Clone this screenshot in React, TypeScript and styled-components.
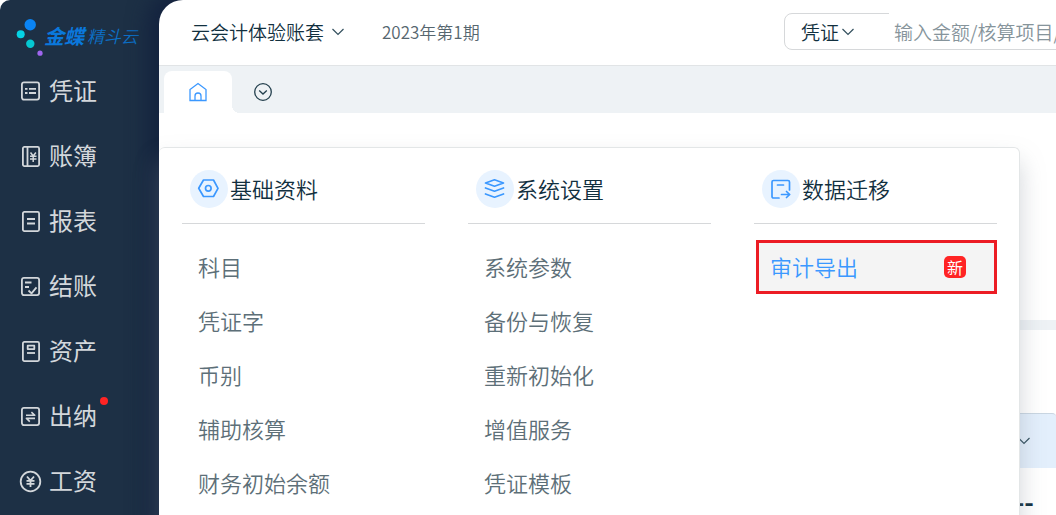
import React from "react";
import styled, { createGlobalStyle } from "styled-components";

const GlobalStyle = createGlobalStyle`
  * { box-sizing: border-box; }
  body {
    margin: 0;
    background: #fff;
    font-family: "Noto Sans CJK SC", sans-serif;
    font-weight: 350;
    color: #12303f;
  }
  a { color: inherit; text-decoration: none; }
  button, input, select { font: inherit; color: inherit; }
  ul { list-style: none; margin: 0; padding: 0; }
`;

const Shell = styled.div`
  display: flex;
  min-height: 100vh;
  overflow: hidden;
  border-top-left-radius: 10px;
  background: #1d3045;
`;

const Sidebar = styled.nav`
  flex: none;
  width: 159px;
`;

const Logo = styled.a`
  display: flex;
  align-items: center;
  height: 59px;
  padding: 14px 0 0 14px;
`;

const LogoMark = styled.svg`
  flex: none;
  width: 30px;
  height: 40px;
`;

const BrandName = styled.span`
  padding-bottom: 2px;
  font-size: 20px;
  font-weight: 700;
  font-style: italic;
  line-height: 24px;
  color: #0a78dd;
  white-space: nowrap;
`;

const ProductName = styled.span`
  margin-left: 3px;
  padding-bottom: 2px;
  font-size: 17px;
  font-style: italic;
  line-height: 24px;
  color: #0c70c8;
  white-space: nowrap;
`;

const SideLink = styled.a`
  position: relative;
  display: flex;
  align-items: center;
  gap: 6px;
  height: 65px;
  padding-left: 19px;
  color: #d3d7db;
`;

const SideLabel = styled.span`
  padding-bottom: 3px;
  font-size: 24px;
  font-weight: 400;
  line-height: 36px;
`;

const SideIcon = styled.svg`
  flex: none;
  width: 24px;
  height: 24px;
  fill: none;
  stroke: #d3d7db;
  stroke-width: 1.8;
  stroke-linejoin: round;
`;

const AlertDot = styled.span`
  position: absolute;
  left: 100px;
  top: 13px;
  width: 8px;
  height: 8px;
  border-radius: 50%;
  background: #ff2424;
`;

const Main = styled.main`
  position: relative;
  flex: 1;
  min-width: 0;
  display: flex;
  flex-direction: column;
  border-top-left-radius: 24px;
  background: #fff;
  box-shadow: 0 0 20px 12px #14233f;
`;

const Header = styled.header`
  display: flex;
  align-items: center;
  height: 66px;
  padding: 0 0 2px 32px;
  border-bottom: 1px solid #e1e4e6;
  overflow: hidden;
  white-space: nowrap;
`;

const AccountButton = styled.button`
  display: flex;
  align-items: center;
  gap: 7px;
  padding: 0;
  border: 0;
  background: none;
  font-size: 19px;
  line-height: 28px;
`;

const Chevron = styled.svg`
  flex: none;
  width: 14px;
  height: 10px;
  fill: none;
  stroke: #33505e;
  stroke-width: 1.2;
`;

const Period = styled.span`
  margin-left: 37px;
  font-size: 17px;
  line-height: 28px;
  color: #56666f;
`;

const Search = styled.form`
  flex: none;
  display: flex;
  width: 336px;
  height: 37px;
  margin-left: auto;
  margin-right: -64px;
  border: 1px solid #d6d8da;
  border-radius: 8px;
`;

const TypeField = styled.label`
  display: flex;
  align-items: center;
  width: 104px;
  padding-left: 16px;
`;

const TypeSelect = styled.select`
  appearance: none;
  width: 40px;
  padding: 0;
  border: 0;
  outline: 0;
  background: none;
  font-size: 19px;
  line-height: 28px;
`;

const SearchInput = styled.input`
  flex: 1;
  min-width: 0;
  margin-top: -1px;
  padding: 0 5px;
  border: 0;
  outline: 0;
  background: #fff;
  font-size: 19px;
  &::placeholder { color: #86949b; opacity: 1; }
`;

const TabStrip = styled.div`
  display: flex;
  align-items: flex-end;
  height: 47px;
  padding-left: 5px;
  background: #eef2f5;
`;

const HomeTab = styled.button`
  position: relative;
  display: grid;
  place-items: center;
  width: 68px;
  height: 42px;
  padding: 0;
  border: 0;
  border-radius: 8px 8px 0 0;
  background: #fff;
  &::after {
    content: "";
    position: absolute;
    left: 100%;
    bottom: 0;
    width: 8px;
    height: 8px;
    background: radial-gradient(circle at 100% 0, transparent 8px, #fff 8px);
  }
`;

const TabsMenu = styled.button`
  display: grid;
  place-items: center;
  width: 62px;
  height: 42px;
  padding: 0;
  border: 0;
  background: none;
`;

const TabIcon = styled.svg<{ $color: string }>`
  width: 20px;
  height: 20px;
  fill: none;
  stroke: ${(p) => p.$color};
  stroke-width: 1.3;
`;

const Content = styled.section`
  position: relative;
  flex: 1;
  display: flex;
  flex-direction: column;
`;

const Overview = styled.div`
  height: 207px;
`;

const Divider = styled.div`
  height: 10px;
  background: #eef2f5;
`;

const Card = styled.div`
  padding-top: 83px;
`;

const FilterBar = styled.div`
  display: flex;
  align-items: center;
  justify-content: flex-end;
  height: 55px;
  padding-right: 25px;
  border-top: 1px solid #c9d6e2;
  border-top-right-radius: 4px;
  background: #e3effc;
`;

const EmptyValue = styled.p`
  margin: 0;
  padding: 15px 22px 0 0;
  font-size: 26px;
  font-weight: 700;
  line-height: 36px;
  text-align: right;
`;

const Flyout = styled.div`
  position: absolute;
  top: 34px;
  left: 0;
  right: 36px;
  bottom: -24px;
  display: grid;
  grid-template-columns: repeat(3, 1fr);
  gap: 43px;
  align-items: start;
  padding: 22px 22px 22px 23px;
  border: 1px solid #e3e6e7;
  border-left: 0;
  border-radius: 6px;
  background: #fff;
  box-shadow: 0 14px 24px rgba(125, 135, 145, 0.35);
`;

const GroupHead = styled.h2`
  display: flex;
  align-items: center;
  gap: 2px;
  margin: 0 0 16px;
  padding: 0 8px 15px;
  border-bottom: 1px solid #d6d8da;
  font-size: 22px;
  font-weight: 350;
  line-height: 32px;
  white-space: nowrap;
`;

const GroupTitle = styled.span`
  padding-bottom: 2px;
`;

const GroupBadge = styled.svg`
  flex: none;
  width: 38px;
  height: 38px;
  border-radius: 50%;
  background: #e8f3ff;
  fill: none;
  stroke: #3b98ff;
  stroke-width: 1.7;
  stroke-linecap: round;
  stroke-linejoin: round;
`;

const MenuLink = styled.a<{ $active?: boolean }>`
  display: flex;
  align-items: center;
  justify-content: space-between;
  height: 54px;
  margin-left: ${(p) => (p.$active ? "2px" : "0")};
  padding: ${(p) => (p.$active ? "0 28px 2px 11px" : "0 16px 2px")};
  border: ${(p) => (p.$active ? "3px solid #ec1c24" : "0")};
  background: ${(p) => (p.$active ? "#f4f4f4" : "none")};
  color: ${(p) => (p.$active ? "#3b98ff" : "#5d6f78")};
  font-size: 22px;
  line-height: 32px;
  white-space: nowrap;
`;

const NewTag = styled.span`
  width: 22px;
  height: 22px;
  margin-top: 2px;
  border-radius: 5px;
  background: #ff2424;
  color: #fff;
  font-size: 16px;
  font-weight: 400;
  line-height: 22px;
  text-align: center;
`;

const Down = () => (
  <Chevron viewBox="0 0 14 10" aria-hidden="true">
    <path d="M1.5 2 7 7.5 12.5 2" />
  </Chevron>
);

const sideItems: { label: string; icon: React.ReactNode; alert?: boolean }[] = [
  {
    label: "凭证",
    icon: (
      <>
        <rect x="2.9" y="2.4" width="17.2" height="17.2" rx="2" />
        <path d="M6 8.800h2.500M10 8.800h7M6 13h2.500M10 13h7" />
      </>
    ),
  },
  {
    label: "账簿",
    icon: (
      <>
        <rect x="3.9" y="1.9" width="16.2" height="19.2" rx="1.5" />
        <path d="M8.5 2v19" />
        <path strokeWidth="1.5" d="M11.5 7.5l2.700 3.500 2.700-3.500M11 11.200h6.500M11 14h6.500M14.200 11v6" />
      </>
    ),
  },
  {
    label: "报表",
    icon: (
      <>
        <rect x="3.9" y="1.9" width="16.2" height="19.2" rx="1.5" />
        <path d="M8 9h8M8 13.5h8" />
      </>
    ),
  },
  {
    label: "结账",
    icon: (
      <>
        <rect x="2.9" y="2.9" width="17.2" height="17.2" rx="2" />
        <path d="M6 7.5h6.5M6 12h4M9.5 15.5l3 2.800 5-6" />
      </>
    ),
  },
  {
    label: "资产",
    icon: (
      <>
        <rect x="3.9" y="1.9" width="16.2" height="19.2" rx="1.5" />
        <rect x="8.7" y="5.7" width="6.6" height="3.4" />
        <path d="M8 13h8" />
      </>
    ),
  },
  {
    label: "出纳",
    alert: true,
    icon: (
      <>
        <rect x="2.9" y="2.9" width="17.2" height="17.2" rx="2" />
        <path strokeWidth="1.6" d="M7 10.300h8.800l-3.400-3.200M16 13.400H7.400l3.400 3.200" />
      </>
    ),
  },
  {
    label: "工资",
    icon: (
      <>
        <circle cx="11.5" cy="11.5" r="9.8" />
        <path d="M8 6.500l3.500 4.200L15 6.500M7.500 10.800h8M7.500 13.800h8M11.500 10.700v6.300" />
      </>
    ),
  },
];

const groups: {
  title: string;
  icon: React.ReactNode;
  items: { label: string; active?: boolean }[];
}[] = [
  {
    title: "基础资料",
    icon: (
      <>
        <path d="M13.5 10h10L28 18.3l-4.5 8.200h-10L8.700 18.300z" />
        <circle cx="18.3" cy="18.3" r="2.8" />
      </>
    ),
    items: ["科目", "凭证字", "币别", "辅助核算", "财务初始余额"].map((label) => ({ label })),
  },
  {
    title: "系统设置",
    icon: (
      <>
        <path d="M18.5 9.800l9 3.200-9 3.200-9-3.200z" />
        <path d="M9.5 18l9 3.200 9-3.200M9.500 24l9 3.200 9-3.200" />
      </>
    ),
    items: ["系统参数", "备份与恢复", "重新初始化", "增值服务", "凭证模板"].map((label) => ({ label })),
  },
  {
    title: "数据迁移",
    icon: (
      <>
        <path d="M17 28h-5.500a1.500 1.500 0 0 1-1.500-1.500v-14.500a1.500 1.500 0 0 1 1.500-1.500h14.500a1.500 1.500 0 0 1 1.500 1.500v8M15.500 15h6M19.500 24.500h8M24.500 21.500l3.200 3-3.200 3" />
      </>
    ),
    items: [{ label: "审计导出", active: true }],
  },
];

export default function App() {
  return (
    <>
      <GlobalStyle />
      <Shell>
        <Sidebar>
          <Logo href="#">
            <LogoMark viewBox="14 18 30 40" aria-hidden="true">
              <circle cx="30.2" cy="25.800" r="5.7" fill="#0a84f5" />
              <circle cx="20.7" cy="35.300" r="4" fill="#05d2e4" />
              <circle cx="30.3" cy="44.800" r="4.2" fill="#05c8d2" />
              <circle cx="40" cy="54.200" r="2.6" fill="#a066f0" />
            </LogoMark>
            <BrandName>金蝶</BrandName>
            <ProductName>精斗云</ProductName>
          </Logo>
          {sideItems.map((item) => (
            <SideLink key={item.label} href="#">
              <SideIcon viewBox="0 0 24 24" aria-hidden="true">{item.icon}</SideIcon>
              <SideLabel>{item.label}</SideLabel>
              {item.alert && <AlertDot />}
            </SideLink>
          ))}
        </Sidebar>
        <Main>
          <Header>
            <AccountButton type="button">
              云会计体验账套
              <Down />
            </AccountButton>
            <Period>2023年第1期</Period>
            <Search>
              <TypeField>
                <TypeSelect aria-label="类型">
                  <option>凭证</option>
                </TypeSelect>
                <Down />
              </TypeField>
              <SearchInput aria-label="搜索" placeholder="输入金额/核算项目/" />
            </Search>
          </Header>
          <TabStrip>
            <HomeTab type="button" aria-label="首页">
              <TabIcon $color="#3b98ff" viewBox="0 0 20 20" aria-hidden="true">
                <path d="M2 18.500V7.500L10 1.500l8 6v11zM7 18.500v-4.500a3 3 0 0 1 6 0v4.500" />
              </TabIcon>
            </HomeTab>
            <TabsMenu type="button" aria-label="更多标签">
              <TabIcon $color="#24404e" viewBox="0 0 20 20" aria-hidden="true">
                <circle cx="10" cy="10" r="8.3" />
                <path d="M6.200 8.500L10 12l3.800-3.500" />
              </TabIcon>
            </TabsMenu>
          </TabStrip>
          <Content>
            <Overview />
            <Divider />
            <Card>
              <FilterBar>
                <Down />
              </FilterBar>
              <EmptyValue>--</EmptyValue>
            </Card>
            <Flyout>
              {groups.map((group) => (
                <section key={group.title}>
                  <GroupHead>
                    <GroupBadge viewBox="0 0 38 38" aria-hidden="true">{group.icon}</GroupBadge>
                    <GroupTitle>{group.title}</GroupTitle>
                  </GroupHead>
                  <ul>
                    {group.items.map((item) => (
                      <li key={item.label}>
                        <MenuLink href="#" $active={item.active}>
                          {item.label}
                          {item.active && <NewTag>新</NewTag>}
                        </MenuLink>
                      </li>
                    ))}
                  </ul>
                </section>
              ))}
            </Flyout>
          </Content>
        </Main>
      </Shell>
    </>
  );
}
